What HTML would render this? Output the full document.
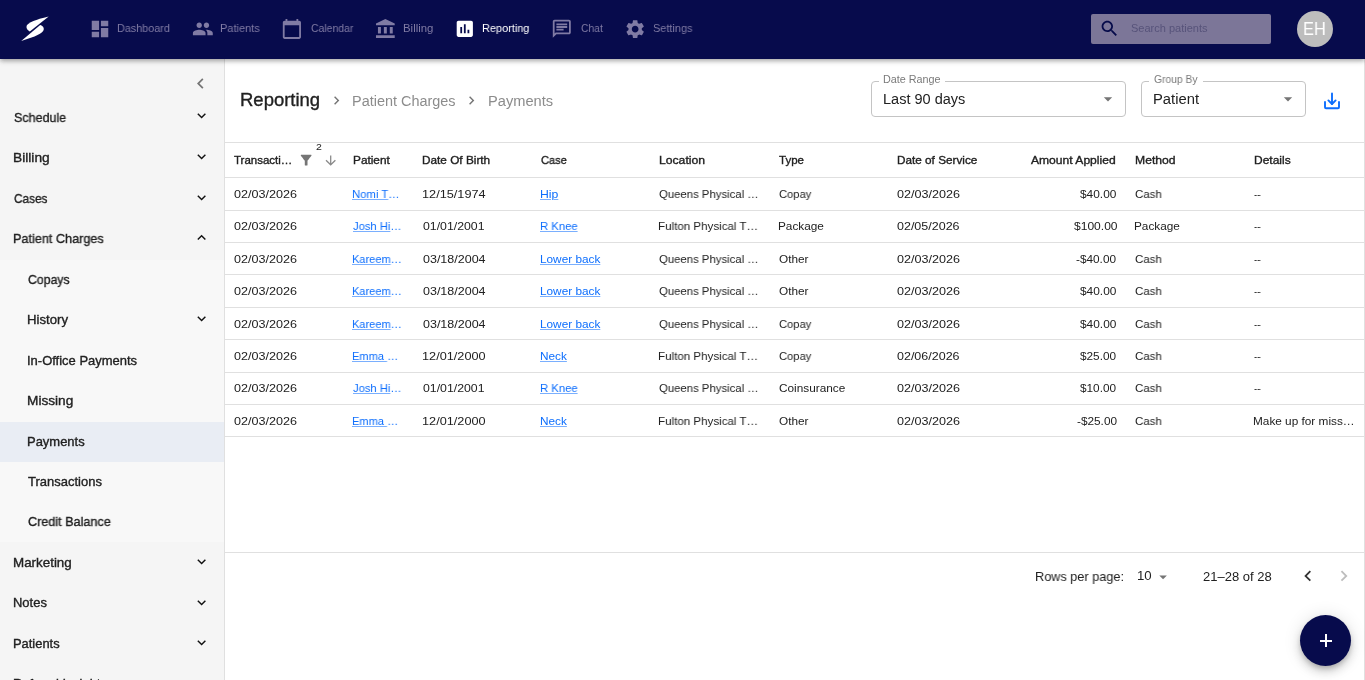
<!DOCTYPE html>
<html><head><meta charset="utf-8">
<style>
*{box-sizing:border-box;margin:0;padding:0}
html,body{width:1365px;height:680px;overflow:hidden;background:#fff}
body{position:relative;font-family:"Liberation Sans",sans-serif;color:#212121}
.a{position:absolute}
.t{position:absolute;white-space:nowrap;line-height:1;transform-origin:0 0;will-change:transform}
.lk .u{text-decoration:underline;text-decoration-thickness:1px;text-underline-offset:1px;text-decoration-color:rgba(13,110,253,.55)}
#hdr{position:absolute;left:0;top:0;width:1365px;height:59px;background:#070b4c;
 box-shadow:0 2px 4px -1px rgba(0,0,0,.2),0 3px 4px 0 rgba(0,0,0,.12),0 1px 8px 0 rgba(0,0,0,.1)}
.navi{position:absolute;fill:#807ba4}
.hl{position:absolute;left:225px;width:1139px;height:1px;background:#e0e0e0}
.ic{position:absolute}
</style></head><body>

<!-- sidebar -->
<div class="a" style="left:0;top:59px;width:224px;height:621px;background:#f5f5f5"></div>
<div class="a" style="left:0;top:259.6px;width:224px;height:282.7px;background:#f8f8f8"></div>
<div class="a" style="left:0;top:422px;width:224px;height:40px;background:#e9edf4"></div>
<div class="a" style="left:224px;top:59px;width:1px;height:621px;background:#e0e0e0"></div>
<div class="a" style="left:1364px;top:59px;width:1px;height:621px;background:#e0e0e0"></div>

<svg class="ic" style="left:189.6px;top:72.7px" width="21" height="21" viewBox="0 0 24 24"><path fill="#757575" d="M15.41 7.41L14 6l-6 6 6 6 1.41-1.41L10.83 12z"/></svg>
<svg class="ic" style="left:192.9px;top:107.3px" width="17.2" height="17.2" viewBox="0 0 24 24"><path fill="#111" d="M16.59 8.59L12 13.17 7.41 8.59 6 10l6 6 6-6z"/></svg>
<svg class="ic" style="left:192.9px;top:148.3px" width="17.2" height="17.2" viewBox="0 0 24 24"><path fill="#111" d="M16.59 8.59L12 13.17 7.41 8.59 6 10l6 6 6-6z"/></svg>
<svg class="ic" style="left:192.9px;top:188.8px" width="17.2" height="17.2" viewBox="0 0 24 24"><path fill="#111" d="M16.59 8.59L12 13.17 7.41 8.59 6 10l6 6 6-6z"/></svg>
<svg class="ic" style="left:192.9px;top:229.3px" width="17.2" height="17.2" viewBox="0 0 24 24"><path fill="#111" d="M12 8l-6 6 1.41 1.41L12 10.83l4.59 4.58L18 14z"/></svg>
<svg class="ic" style="left:192.9px;top:310.4px" width="17.2" height="17.2" viewBox="0 0 24 24"><path fill="#111" d="M16.59 8.59L12 13.17 7.41 8.59 6 10l6 6 6-6z"/></svg>
<svg class="ic" style="left:192.9px;top:552.8px" width="17.2" height="17.2" viewBox="0 0 24 24"><path fill="#111" d="M16.59 8.59L12 13.17 7.41 8.59 6 10l6 6 6-6z"/></svg>
<svg class="ic" style="left:192.9px;top:593.5px" width="17.2" height="17.2" viewBox="0 0 24 24"><path fill="#111" d="M16.59 8.59L12 13.17 7.41 8.59 6 10l6 6 6-6z"/></svg>
<svg class="ic" style="left:192.9px;top:634px" width="17.2" height="17.2" viewBox="0 0 24 24"><path fill="#111" d="M16.59 8.59L12 13.17 7.41 8.59 6 10l6 6 6-6z"/></svg>

<!-- breadcrumb separators -->
<svg class="ic" style="left:327.5px;top:92.4px" width="17" height="17" viewBox="0 0 24 24"><path fill="#757575" d="M10 6L8.59 7.41 13.17 12l-4.58 4.59L10 18l6-6z"/></svg>
<svg class="ic" style="left:463.1px;top:92.4px" width="17" height="17" viewBox="0 0 24 24"><path fill="#757575" d="M10 6L8.59 7.41 13.17 12l-4.58 4.59L10 18l6-6z"/></svg>

<!-- selects -->
<div class="a" style="left:871px;top:81px;width:255px;height:35.5px;border:1px solid #c4c4c4;border-radius:4px"></div>
<div class="a" style="left:879px;top:76px;width:66px;height:8px;background:#fff"></div>
<svg class="ic" style="left:1098px;top:89.1px" width="20" height="20" viewBox="0 0 24 24"><path fill="#757575" d="M7 10l5 5 5-5z"/></svg>
<div class="a" style="left:1141px;top:81px;width:165px;height:35.5px;border:1px solid #c4c4c4;border-radius:4px"></div>
<div class="a" style="left:1149px;top:76px;width:54px;height:8px;background:#fff"></div>
<svg class="ic" style="left:1278px;top:89.1px" width="20" height="20" viewBox="0 0 24 24"><path fill="#757575" d="M7 10l5 5 5-5z"/></svg>
<!-- download icon -->
<svg class="ic" style="left:1322px;top:91px" width="20" height="20" viewBox="0 0 20 20">
 <g fill="none" stroke="#0d6efd" stroke-width="1.9" stroke-linecap="round" stroke-linejoin="round">
  <path d="M10 2.5V13"/><path d="M6.4 9.4L10 13 13.6 9.4"/><path d="M3 11v5.2a1 1 0 0 0 1 1h12a1 1 0 0 0 1-1V11"/>
 </g>
</svg>

<!-- table lines -->
<div class="hl" style="top:142px"></div>
<div class="hl" style="top:177px"></div>
<div class="hl" style="top:210px"></div>
<div class="hl" style="top:242px"></div>
<div class="hl" style="top:274px"></div>
<div class="hl" style="top:307px"></div>
<div class="hl" style="top:339px"></div>
<div class="hl" style="top:372px"></div>
<div class="hl" style="top:404px"></div>
<div class="hl" style="top:436px"></div>
<div class="hl" style="top:552px"></div>

<!-- header icons -->
<svg class="ic" style="left:297.9px;top:152.2px" width="16.3" height="16.3" viewBox="0 0 24 24"><path fill="#757575" d="M4.25 5.61C6.27 8.2 10 13 10 13v6c0 .55.45 1 1 1h2c.55 0 1-.45 1-1v-6s3.72-4.8 5.74-7.39c.51-.66.04-1.61-.79-1.61H5.04c-.83 0-1.3.95-.79 1.61z"/></svg>
<svg class="ic" style="left:323px;top:153px" width="15.4" height="15.4" viewBox="0 0 24 24"><path fill="#8a8a8a" d="M20 12l-1.41-1.41L13 16.17V4h-2v12.17l-5.58-5.59L4 12l8 8 8-8z"/></svg>

<!-- pagination icons -->
<svg class="ic" style="left:1154px;top:567.5px" width="18.2" height="18.2" viewBox="0 0 24 24"><path fill="#757575" d="M7 10l5 5 5-5z"/></svg>
<svg class="ic" style="left:1297.3px;top:565.4px" width="21.8" height="21.8" viewBox="0 0 24 24"><path fill="#333" d="M15.41 7.41L14 6l-6 6 6 6 1.41-1.41L10.83 12z"/></svg>
<svg class="ic" style="left:1333px;top:565.4px" width="21.8" height="21.8" viewBox="0 0 24 24"><path fill="#bdbdbd" d="M10 6L8.59 7.41 13.17 12l-4.58 4.59L10 18l6-6z"/></svg>

<!-- FAB -->
<div class="a" style="left:1300px;top:615px;width:51px;height:51px;border-radius:50%;background:#070b4c;
 box-shadow:0 3px 5px -1px rgba(0,0,0,.2),0 6px 10px 0 rgba(0,0,0,.14),0 1px 18px 0 rgba(0,0,0,.12)"></div>
<div class="a" style="left:1319.6px;top:639.5px;width:12.7px;height:2px;background:#fff"></div>
<div class="a" style="left:1324.95px;top:633.6px;width:2px;height:13.8px;background:#fff"></div>

<!-- header -->
<div id="hdr">
 <svg class="a" style="left:0;top:0" width="60" height="59" viewBox="0 0 60 59">
  <path fill="#fff" d="M48.7,16.4 C42,18 30,21 27,25 C25.5,27.5 27.5,30.5 29.8,31.4 Z"/>
  <path fill="#fff" d="M21.2,40.9 L40.2,24.9 C42.5,25.5 44.3,27.5 43.6,30 C42.5,33.5 36,36.5 21.2,40.9 Z"/>
 </svg>
 <svg class="navi" style="left:89px;top:18px" width="22" height="22" viewBox="0 0 24 24"><path d="M3 13h8V3H3v10zm0 8h8v-6H3v6zm10 0h8V11h-8v10zm0-18v6h8V3h-8z"/></svg>
 <svg class="navi" style="left:192.2px;top:17.75px" width="21.7" height="21.7" viewBox="0 0 24 24"><path d="M16 11c1.660 0 2.99-1.34 2.99-3S17.66 5 16 5c-1.66 0-3 1.34-3 3s1.34 3 3 3zm-8 0c1.66 0 2.99-1.34 2.99-3S9.66 5 8 5C6.34 5 5 6.34 5 8s1.34 3 3 3zm0 2c-2.33 0-7 1.17-7 3.5V19h14v-2.5c0-2.33-4.67-3.5-7-3.5zm8 0c-.29 0-.62.02-.97.05 1.16.84 1.970 1.97 1.97 3.45V19h6v-2.5c0-2.33-4.67-3.5-7-3.5z"/></svg>
 <svg class="navi" style="left:281.1px;top:17.85px" width="21.8" height="21.8" viewBox="0 0 24 24"><path d="M20 3h-1V1h-2v2H7V1H5v2H4c-1.1 0-2 .9-2 2v16c0 1.1.9 2 2 2h16c1.1 0 2-.9 2-2V5c0-1.1-.9-2-2-2zm0 18H4V8h16v13z"/></svg>
 <svg class="navi" style="left:374.45px;top:17.9px" width="23.7" height="21.8" viewBox="0 0 24 24" preserveAspectRatio="none"><path d="M4 10v7h3v-7H4zm6 0v7h3v-7h-3zM2 22h19v-3H2v3zm14-12v7h3v-7h-3zm-4.5-9L2 6v2h19V6l-9.5-5z"/></svg>
 <svg class="a" style="left:453.9px;top:17.7px" width="21.6" height="21.6" viewBox="0 0 24 24"><path fill="#fff" d="M19 3H5c-1.1 0-2 .9-2 2v14c0 1.1.9 2 2 2h14c1.1 0 2-.9 2-2V5c0-1.1-.9-2-2-2zM9 17H7v-7h2v7zm4 0h-2V7h2v10zm4 0h-2v-4h2v4z"/></svg>
 <svg class="navi" style="left:550.9px;top:17.96px" width="21.6" height="21.6" viewBox="0 0 24 24"><path d="M4 4h16v12H5.17L4 17.17V4m0-2c-1.1 0-1.99.9-1.99 2L2 22l4-4h14c1.1 0 2-.9 2-2V4c0-1.1-.9-2-2-2H4zm2 10h8v2H6v-2zm0-3h12v2H6V9zm0-3h12v2H6V6z"/></svg>
 <svg class="navi" style="left:623.5px;top:17.74px" width="22.3" height="22.3" viewBox="0 0 24 24"><path d="M19.14 12.94c.04-.3.06-.61.06-.94 0-.32-.02-.64-.07-.94l2.03-1.58c.18-.14.23-.41.12-.61l-1.92-3.32c-.12-.22-.37-.29-.59-.22l-2.39.96c-.5-.38-1.03-.7-1.62-.94l-.36-2.54c-.04-.24-.24-.41-.48-.41h-3.84c-.24 0-.43.17-.47.41l-.36 2.54c-.59.24-1.13.57-1.62.94l-2.39-.96c-.22-.08-.47 0-.59.22L2.74 8.87c-.12.21-.08.47.12.61l2.03 1.58c-.05.3-.09.63-.09.94s.02.64.07.94l-2.03 1.58c-.18.14-.23.41-.12.61l1.92 3.32c.12.22.37.29.59.22l2.39-.96c.5.38 1.03.7 1.62.94l.36 2.54c.05.24.24.41.48.41h3.84c.24 0 .44-.17.47-.41l.36-2.54c.59-.24 1.13-.56 1.62-.94l2.39.96c.22.08.47 0 .59-.22l1.92-3.32c.12-.22.07-.47-.12-.61l-2.01-1.58zM12 15.6c-1.98 0-3.6-1.62-3.6-3.6s1.62-3.6 3.6-3.6 3.6 1.62 3.6 3.6-1.62 3.6-3.6 3.6z"/></svg>
 <div class="a" style="left:1091px;top:14px;width:180px;height:30px;background:#7c7698;border-radius:2px"></div>
 <svg class="a" style="left:1099.4px;top:18.3px" width="21" height="21" viewBox="0 0 24 24"><path fill="#060b4a" d="M15.5 14h-.79l-.28-.27C15.41 12.59 16 11.11 16 9.5 16 5.91 13.09 3 9.5 3S3 5.91 3 9.5 5.91 16 9.5 16c1.61 0 3.09-.59 4.23-1.57l.27.28v.79l5 4.99L20.49 19l-4.99-5zm-6 0C7.01 14 5 11.99 5 9.5S7.01 5 9.5 5 14 7.01 14 9.5 11.99 14 9.5 14z"/></svg>
 <div class="a" style="left:1297px;top:11px;width:36px;height:36px;border-radius:50%;background:#bdbdbd"></div>
</div>

<div class="t" style="left:117.05px;top:23px;color:#807ba4;font-size:11.4px;transform:scaleX(0.9481);">Dashboard</div>
<div class="t" style="left:219.84px;top:23px;color:#807ba4;font-size:11.4px;transform:scaleX(0.9650);">Patients</div>
<div class="t" style="left:310.60px;top:23px;color:#807ba4;font-size:11.4px;transform:scaleX(0.9174);">Calendar</div>
<div class="t" style="left:402.81px;top:23px;color:#807ba4;font-size:11.4px;transform:scaleX(0.9897);">Billing</div>
<div class="t" style="left:482.44px;top:23px;color:#fff;font-size:11.4px;transform:scaleX(0.9604);">Reporting</div>
<div class="t" style="left:580.70px;top:23px;color:#807ba4;font-size:11.4px;transform:scaleX(0.9042);">Chat</div>
<div class="t" style="left:653.00px;top:23px;color:#807ba4;font-size:11.4px;transform:scaleX(0.9585);">Settings</div>
<div class="t" style="left:1131.40px;top:23px;color:#57537a;font-size:11px;">Search patients</div>
<div class="t" style="left:1303.09px;top:20px;color:#fff;font-size:18px;transform:scaleX(0.9130);">EH</div>
<div class="t" style="left:13.80px;top:112px;color:#212121;font-size:12.9px;-webkit-text-stroke:0.35px currentColor;transform:scaleX(0.9704);">Schedule</div>
<div class="t" style="left:12.73px;top:152px;color:#212121;font-size:12.9px;-webkit-text-stroke:0.35px currentColor;transform:scaleX(1.0667);">Billing</div>
<div class="t" style="left:14.10px;top:193px;color:#212121;font-size:12.9px;-webkit-text-stroke:0.35px currentColor;transform:scaleX(0.9162);">Cases</div>
<div class="t" style="left:13.12px;top:233px;color:#212121;font-size:12.9px;-webkit-text-stroke:0.35px currentColor;transform:scaleX(0.9815);">Patient Charges</div>
<div class="t" style="left:28.00px;top:274px;color:#212121;font-size:12.9px;-webkit-text-stroke:0.35px currentColor;transform:scaleX(0.9523);">Copays</div>
<div class="t" style="left:26.98px;top:314px;color:#212121;font-size:12.9px;-webkit-text-stroke:0.35px currentColor;transform:scaleX(1.0225);">History</div>
<div class="t" style="left:27.29px;top:355px;color:#212121;font-size:12.9px;-webkit-text-stroke:0.35px currentColor;transform:scaleX(1.0064);">In-Office Payments</div>
<div class="t" style="left:27.24px;top:395px;color:#212121;font-size:12.9px;-webkit-text-stroke:0.35px currentColor;transform:scaleX(1.0595);">Missing</div>
<div class="t" style="left:27.19px;top:436px;color:#212121;font-size:12.9px;-webkit-text-stroke:0.35px currentColor;transform:scaleX(1.0054);">Payments</div>
<div class="t" style="left:28.30px;top:476px;color:#212121;font-size:12.9px;-webkit-text-stroke:0.35px currentColor;transform:scaleX(1.0082);">Transactions</div>
<div class="t" style="left:28.00px;top:516px;color:#212121;font-size:12.9px;-webkit-text-stroke:0.35px currentColor;transform:scaleX(0.9788);">Credit Balance</div>
<div class="t" style="left:12.86px;top:557px;color:#212121;font-size:12.9px;-webkit-text-stroke:0.35px currentColor;transform:scaleX(1.0382);">Marketing</div>
<div class="t" style="left:12.89px;top:597px;color:#212121;font-size:12.9px;-webkit-text-stroke:0.35px currentColor;transform:scaleX(1.0061);">Notes</div>
<div class="t" style="left:12.90px;top:638px;color:#212121;font-size:12.9px;-webkit-text-stroke:0.35px currentColor;">Patients</div>
<div class="t" style="left:12.90px;top:678px;color:#212121;font-size:12.9px;-webkit-text-stroke:0.35px currentColor;">Referral Insights</div>
<div class="t" style="left:239.59px;top:91px;color:#212121;font-size:18.4px;-webkit-text-stroke:0.35px currentColor;transform:scaleX(1.0051);">Reporting</div>
<div class="t" style="left:351.67px;top:94px;color:#8c8c8c;font-size:14px;transform:scaleX(1.0313);">Patient Charges</div>
<div class="t" style="left:487.65px;top:94px;color:#8c8c8c;font-size:14px;transform:scaleX(1.0459);">Payments</div>
<div class="t" style="left:882.81px;top:74px;color:#7a7a7a;font-size:10.8px;transform:scaleX(0.9946);">Date Range</div>
<div class="t" style="left:882.95px;top:93px;color:#212121;font-size:13.8px;transform:scaleX(1.0519);">Last 90 days</div>
<div class="t" style="left:1153.80px;top:74px;color:#7a7a7a;font-size:10.8px;transform:scaleX(0.9543);">Group By</div>
<div class="t" style="left:1152.93px;top:93px;color:#212121;font-size:13.8px;transform:scaleX(1.0714);">Patient</div>
<div class="t" style="left:233.80px;top:155px;color:#212121;font-size:11.5px;-webkit-text-stroke:0.35px currentColor;">Transacti…</div>
<div class="t" style="left:315.80px;top:142px;color:#212121;font-size:9.4px;transform:scaleX(1.1200);">2</div>
<div class="t" style="left:352.90px;top:155px;color:#212121;font-size:11.5px;-webkit-text-stroke:0.35px currentColor;transform:scaleX(1.0278);">Patient</div>
<div class="t" style="left:421.80px;top:155px;color:#212121;font-size:11.5px;-webkit-text-stroke:0.35px currentColor;transform:scaleX(1.0258);">Date Of Birth</div>
<div class="t" style="left:540.50px;top:155px;color:#212121;font-size:11.5px;-webkit-text-stroke:0.35px currentColor;transform:scaleX(0.9593);">Case</div>
<div class="t" style="left:659.40px;top:155px;color:#212121;font-size:11.5px;-webkit-text-stroke:0.35px currentColor;transform:scaleX(1.0581);">Location</div>
<div class="t" style="left:778.50px;top:155px;color:#212121;font-size:11.5px;-webkit-text-stroke:0.35px currentColor;">Type</div>
<div class="t" style="left:897.40px;top:155px;color:#212121;font-size:11.5px;-webkit-text-stroke:0.35px currentColor;transform:scaleX(1.0215);">Date of Service</div>
<div class="t" style="left:1031.30px;top:155px;color:#212121;font-size:11.5px;-webkit-text-stroke:0.35px currentColor;transform:scaleX(1.0506);">Amount Applied</div>
<div class="t" style="left:1135.10px;top:155px;color:#212121;font-size:11.5px;-webkit-text-stroke:0.35px currentColor;transform:scaleX(1.0579);">Method</div>
<div class="t" style="left:1253.80px;top:155px;color:#212121;font-size:11.5px;-webkit-text-stroke:0.35px currentColor;transform:scaleX(1.0429);">Details</div>
<div class="t" style="left:1034.52px;top:570px;color:#212121;font-size:13px;transform:scaleX(0.9775);">Rows per page:</div>
<div class="t" style="left:1136.78px;top:569px;color:#212121;font-size:13px;transform:scaleX(1.0154);">10</div>
<div class="t" style="left:1202.50px;top:570px;color:#212121;font-size:13px;">21–28 of 28</div>
<div class="t" style="left:233.80px;top:189px;color:#212121;font-size:11.8px;transform:scaleX(1.0678);">02/03/2026</div>
<div class="t lk" style="left:352.44px;top:189px;color:#0d6efd;font-size:11.8px;transform:scaleX(0.9596);"><span class="u">Nomi T</span>…</div>
<div class="t" style="left:421.52px;top:189px;color:#212121;font-size:11.8px;transform:scaleX(1.0776);">12/15/1974</div>
<div class="t lk" style="left:540.26px;top:189px;color:#0d6efd;font-size:11.8px;transform:scaleX(1.0353);"><span class="u">Hip</span></div>
<div class="t" style="left:659.40px;top:189px;color:#212121;font-size:11.8px;transform:scaleX(0.9618);">Queens Physical …</div>
<div class="t" style="left:778.50px;top:189px;color:#212121;font-size:11.8px;transform:scaleX(0.9471);">Copay</div>
<div class="t" style="left:897.40px;top:189px;color:#212121;font-size:11.8px;transform:scaleX(1.0678);">02/03/2026</div>
<div class="t" style="left:1080.10px;top:189px;color:#212121;font-size:11.8px;transform:scaleX(1.0083);">$40.00</div>
<div class="t" style="left:1135.10px;top:189px;color:#212121;font-size:11.8px;transform:scaleX(0.9741);">Cash</div>
<div class="t" style="left:1253.80px;top:189px;color:#212121;font-size:11.8px;transform:scaleX(0.8125);">--</div>
<div class="t" style="left:233.80px;top:221px;color:#212121;font-size:11.8px;transform:scaleX(1.0678);">02/03/2026</div>
<div class="t lk" style="left:353.40px;top:221px;color:#0d6efd;font-size:11.8px;transform:scaleX(0.9500);"><span class="u">Josh Hi</span>…</div>
<div class="t" style="left:422.60px;top:221px;color:#212121;font-size:11.8px;transform:scaleX(1.0424);">01/01/2001</div>
<div class="t lk" style="left:540.34px;top:221px;color:#0d6efd;font-size:11.8px;transform:scaleX(0.9579);"><span class="u">R Knee</span></div>
<div class="t" style="left:658.42px;top:221px;color:#212121;font-size:11.8px;transform:scaleX(0.9810);">Fulton Physical T…</div>
<div class="t" style="left:777.50px;top:221px;color:#212121;font-size:11.8px;">Package</div>
<div class="t" style="left:897.40px;top:221px;color:#212121;font-size:11.8px;transform:scaleX(1.0593);">02/05/2026</div>
<div class="t" style="left:1073.50px;top:221px;color:#212121;font-size:11.8px;transform:scaleX(1.0214);">$100.00</div>
<div class="t" style="left:1134.10px;top:221px;color:#212121;font-size:11.8px;">Package</div>
<div class="t" style="left:1253.80px;top:221px;color:#212121;font-size:11.8px;transform:scaleX(0.8125);">--</div>
<div class="t" style="left:233.80px;top:254px;color:#212121;font-size:11.8px;transform:scaleX(1.0678);">02/03/2026</div>
<div class="t lk" style="left:352.46px;top:254px;color:#0d6efd;font-size:11.8px;transform:scaleX(0.9373);"><span class="u">Kareem</span>…</div>
<div class="t" style="left:422.60px;top:254px;color:#212121;font-size:11.8px;transform:scaleX(1.0593);">03/18/2004</div>
<div class="t lk" style="left:540.30px;top:254px;color:#0d6efd;font-size:11.8px;"><span class="u">Lower back</span></div>
<div class="t" style="left:659.40px;top:254px;color:#212121;font-size:11.8px;transform:scaleX(0.9618);">Queens Physical …</div>
<div class="t" style="left:778.50px;top:254px;color:#212121;font-size:11.8px;">Other</div>
<div class="t" style="left:897.40px;top:254px;color:#212121;font-size:11.8px;transform:scaleX(1.0678);">02/03/2026</div>
<div class="t" style="left:1076.40px;top:254px;color:#212121;font-size:11.8px;">-$40.00</div>
<div class="t" style="left:1135.10px;top:254px;color:#212121;font-size:11.8px;transform:scaleX(0.9741);">Cash</div>
<div class="t" style="left:1253.80px;top:254px;color:#212121;font-size:11.8px;transform:scaleX(0.8125);">--</div>
<div class="t" style="left:233.80px;top:286px;color:#212121;font-size:11.8px;transform:scaleX(1.0678);">02/03/2026</div>
<div class="t lk" style="left:352.46px;top:286px;color:#0d6efd;font-size:11.8px;transform:scaleX(0.9373);"><span class="u">Kareem</span>…</div>
<div class="t" style="left:422.60px;top:286px;color:#212121;font-size:11.8px;transform:scaleX(1.0593);">03/18/2004</div>
<div class="t lk" style="left:540.30px;top:286px;color:#0d6efd;font-size:11.8px;"><span class="u">Lower back</span></div>
<div class="t" style="left:659.40px;top:286px;color:#212121;font-size:11.8px;transform:scaleX(0.9618);">Queens Physical …</div>
<div class="t" style="left:778.50px;top:286px;color:#212121;font-size:11.8px;">Other</div>
<div class="t" style="left:897.40px;top:286px;color:#212121;font-size:11.8px;transform:scaleX(1.0678);">02/03/2026</div>
<div class="t" style="left:1080.10px;top:286px;color:#212121;font-size:11.8px;transform:scaleX(1.0083);">$40.00</div>
<div class="t" style="left:1135.10px;top:286px;color:#212121;font-size:11.8px;transform:scaleX(0.9741);">Cash</div>
<div class="t" style="left:1253.80px;top:286px;color:#212121;font-size:11.8px;transform:scaleX(0.8125);">--</div>
<div class="t" style="left:233.80px;top:319px;color:#212121;font-size:11.8px;transform:scaleX(1.0678);">02/03/2026</div>
<div class="t lk" style="left:352.46px;top:319px;color:#0d6efd;font-size:11.8px;transform:scaleX(0.9373);"><span class="u">Kareem</span>…</div>
<div class="t" style="left:422.60px;top:319px;color:#212121;font-size:11.8px;transform:scaleX(1.0593);">03/18/2004</div>
<div class="t lk" style="left:540.30px;top:319px;color:#0d6efd;font-size:11.8px;"><span class="u">Lower back</span></div>
<div class="t" style="left:659.40px;top:319px;color:#212121;font-size:11.8px;transform:scaleX(0.9618);">Queens Physical …</div>
<div class="t" style="left:778.50px;top:319px;color:#212121;font-size:11.8px;transform:scaleX(0.9471);">Copay</div>
<div class="t" style="left:897.40px;top:319px;color:#212121;font-size:11.8px;transform:scaleX(1.0678);">02/03/2026</div>
<div class="t" style="left:1080.10px;top:319px;color:#212121;font-size:11.8px;transform:scaleX(1.0083);">$40.00</div>
<div class="t" style="left:1135.10px;top:319px;color:#212121;font-size:11.8px;transform:scaleX(0.9741);">Cash</div>
<div class="t" style="left:1253.80px;top:319px;color:#212121;font-size:11.8px;transform:scaleX(0.8125);">--</div>
<div class="t" style="left:233.80px;top:351px;color:#212121;font-size:11.8px;transform:scaleX(1.0678);">02/03/2026</div>
<div class="t lk" style="left:352.46px;top:351px;color:#0d6efd;font-size:11.8px;transform:scaleX(0.9383);"><span class="u">Emma </span>…</div>
<div class="t" style="left:421.52px;top:351px;color:#212121;font-size:11.8px;transform:scaleX(1.0776);">12/01/2000</div>
<div class="t lk" style="left:540.30px;top:351px;color:#0d6efd;font-size:11.8px;"><span class="u">Neck</span></div>
<div class="t" style="left:658.42px;top:351px;color:#212121;font-size:11.8px;transform:scaleX(0.9810);">Fulton Physical T…</div>
<div class="t" style="left:778.50px;top:351px;color:#212121;font-size:11.8px;transform:scaleX(0.9471);">Copay</div>
<div class="t" style="left:897.40px;top:351px;color:#212121;font-size:11.8px;transform:scaleX(1.0593);">02/06/2026</div>
<div class="t" style="left:1080.40px;top:351px;color:#212121;font-size:11.8px;">$25.00</div>
<div class="t" style="left:1135.10px;top:351px;color:#212121;font-size:11.8px;transform:scaleX(0.9741);">Cash</div>
<div class="t" style="left:1253.80px;top:351px;color:#212121;font-size:11.8px;transform:scaleX(0.8125);">--</div>
<div class="t" style="left:233.80px;top:383px;color:#212121;font-size:11.8px;transform:scaleX(1.0678);">02/03/2026</div>
<div class="t lk" style="left:353.40px;top:383px;color:#0d6efd;font-size:11.8px;transform:scaleX(0.9500);"><span class="u">Josh Hi</span>…</div>
<div class="t" style="left:422.60px;top:383px;color:#212121;font-size:11.8px;transform:scaleX(1.0424);">01/01/2001</div>
<div class="t lk" style="left:540.34px;top:383px;color:#0d6efd;font-size:11.8px;transform:scaleX(0.9579);"><span class="u">R Knee</span></div>
<div class="t" style="left:659.40px;top:383px;color:#212121;font-size:11.8px;transform:scaleX(0.9618);">Queens Physical …</div>
<div class="t" style="left:778.50px;top:383px;color:#212121;font-size:11.8px;">Coinsurance</div>
<div class="t" style="left:897.40px;top:383px;color:#212121;font-size:11.8px;transform:scaleX(1.0678);">02/03/2026</div>
<div class="t" style="left:1080.40px;top:383px;color:#212121;font-size:11.8px;">$10.00</div>
<div class="t" style="left:1135.10px;top:383px;color:#212121;font-size:11.8px;transform:scaleX(0.9741);">Cash</div>
<div class="t" style="left:1253.80px;top:383px;color:#212121;font-size:11.8px;transform:scaleX(0.8125);">--</div>
<div class="t" style="left:233.80px;top:416px;color:#212121;font-size:11.8px;transform:scaleX(1.0678);">02/03/2026</div>
<div class="t lk" style="left:352.46px;top:416px;color:#0d6efd;font-size:11.8px;transform:scaleX(0.9383);"><span class="u">Emma </span>…</div>
<div class="t" style="left:421.52px;top:416px;color:#212121;font-size:11.8px;transform:scaleX(1.0776);">12/01/2000</div>
<div class="t lk" style="left:540.30px;top:416px;color:#0d6efd;font-size:11.8px;"><span class="u">Neck</span></div>
<div class="t" style="left:658.42px;top:416px;color:#212121;font-size:11.8px;transform:scaleX(0.9810);">Fulton Physical T…</div>
<div class="t" style="left:778.50px;top:416px;color:#212121;font-size:11.8px;">Other</div>
<div class="t" style="left:897.40px;top:416px;color:#212121;font-size:11.8px;transform:scaleX(1.0678);">02/03/2026</div>
<div class="t" style="left:1076.80px;top:416px;color:#212121;font-size:11.8px;transform:scaleX(0.9900);">-$25.00</div>
<div class="t" style="left:1135.10px;top:416px;color:#212121;font-size:11.8px;transform:scaleX(0.9741);">Cash</div>
<div class="t" style="left:1252.80px;top:416px;color:#212121;font-size:11.8px;">Make up for miss…</div>

</body></html>
